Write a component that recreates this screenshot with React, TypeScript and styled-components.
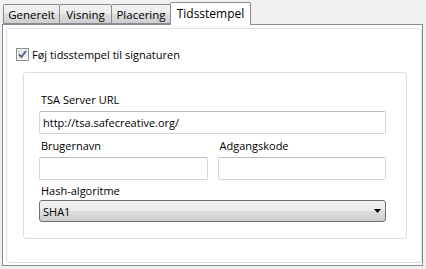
import React, { useState } from "react";
import styled, { createGlobalStyle } from "styled-components";

const GlobalStyle = createGlobalStyle`
  html, body {
    margin: 0;
    padding: 0;
    background: #f0f0f0;
    width: 426px;
    height: 269px;
    overflow: hidden;
  }
  * {
    box-sizing: border-box;
  }
`;

const Window = styled.div`
  width: 426px;
  height: 269px;
  padding: 0 3px 3px 2px;
  display: flex;
  flex-direction: column;
  font-family: "Open Sans", "Liberation Sans", sans-serif;
  font-size: 11px;
  color: #000;
`;

const TabStrip = styled.div`
  display: flex;
  align-items: flex-end;
  height: 24px;
  padding-left: 1px;
  position: relative;
  z-index: 1;
`;

const Tab = styled.div<{ $active?: boolean; $width: number }>`
  width: ${({ $width }) => $width}px;
  height: ${({ $active }) => ($active ? "23px" : "20px")};
  margin-bottom: ${({ $active }) => ($active ? "-1px" : "0")};
  margin-left: -1px;
  border: 1px solid #898c95;
  border-bottom: ${({ $active }) => ($active ? "none" : "1px solid #898c95")};
  border-radius: 2px 2px 0 0;
  background: ${({ $active }) =>
    $active
      ? "#ffffff"
      : "linear-gradient(to bottom, #f2f2f2 0%, #ebebeb 50%, #dddddd 51%, #cfcfcf 100%)"};
  display: flex;
  align-items: ${({ $active }) => ($active ? "flex-start" : "center")};
  padding-top: ${({ $active }) => ($active ? "2px" : "0")};
  justify-content: center;
  font-size: ${({ $active }) => ($active ? "12px" : "11.5px")};
  cursor: default;
  &:first-child {
    margin-left: 0;
  }
`;

const Pane = styled.div`
  flex: 1;
  border: 1px solid #898c95;
  background: #ffffff;
  display: flex;
  padding: 3px 0 2px 3px;
`;

const PaneInner = styled.div`
  flex: 1;
  border: 1px solid #d9e0e8;
  border-radius: 3px;
  padding: 17px 14px 0 9px;
  display: flex;
  flex-direction: column;
`;

const CheckRow = styled.label`
  display: flex;
  align-items: center;
  gap: 3px;
  height: 16px;
  cursor: default;
`;

const CheckBox = styled.span<{ $checked: boolean }>`
  width: 13px;
  height: 13px;
  border: 1px solid #8f8f8f;
  background: linear-gradient(135deg, #dcdcdc 0%, #f6f6f6 100%);
  box-shadow: inset 0 0 0 1px #f4f4f4;
  display: flex;
  align-items: center;
  justify-content: center;
  svg {
    display: ${({ $checked }) => ($checked ? "block" : "none")};
  }
`;

const Group = styled.div`
  margin: 10px 0 0 7px;
  height: 167px;
  border: 1px solid #d5dfe5;
  border-radius: 3px;
  padding: 19px 20px 0 15px;
`;

const Field = styled.div<{ $gap?: number }>`
  display: flex;
  flex-direction: column;
  margin-top: ${({ $gap }) => $gap ?? 0}px;
  flex: 1;
`;

const FieldRow = styled.div`
  display: flex;
  gap: 10px;
  margin-top: 4px;
`;

const Label = styled.div<{ $tight?: boolean }>`
  height: 16px;
  line-height: 16px;
  padding-left: 2px;
  margin-bottom: ${({ $tight }) => ($tight ? "1px" : "3px")};
`;

const TextInput = styled.input`
  height: 23px;
  width: 100%;
  border: 1px solid #d3d6dc;
  border-top-color: #b9bcc2;
  border-radius: 2px;
  padding: 0 3px;
  font-family: inherit;
  font-size: 11px;
  color: #000;
  background: #fff;
  outline: none;
`;

const SelectBox = styled.div`
  height: 22px;
  border: 1px solid #707070;
  border-radius: 3px;
  background: linear-gradient(to bottom, #f2f2f2 0%, #ebebeb 50%, #dddddd 51%, #cfcfcf 100%);
  display: flex;
  align-items: center;
  justify-content: space-between;
  padding: 0 4px 0 3px;
  cursor: default;
`;

const tabs = [
  { name: "Generelt", width: 57 },
  { name: "Visning", width: 53 },
  { name: "Placering", width: 60 },
  { name: "Tidsstempel", width: 81 },
];

export default function App() {
  const [active, setActive] = useState("Tidsstempel");
  const [checked, setChecked] = useState(true);
  const [url, setUrl] = useState("http://tsa.safecreative.org/");
  const [user, setUser] = useState("");
  const [pass, setPass] = useState("");

  return (
    <>
      <GlobalStyle />
      <Window>
        <TabStrip>
          {tabs.map((t) => (
            <Tab
              key={t.name}
              $width={t.width}
              $active={t.name === active}
              onClick={() => setActive(t.name)}
            >
              {t.name}
            </Tab>
          ))}
        </TabStrip>
        <Pane>
          <PaneInner>
            <CheckRow onClick={() => setChecked(!checked)}>
              <CheckBox $checked={checked}>
                <svg width="9" height="9" viewBox="0 0 9 9">
                  <path
                    d="M1 4.5 L3.5 7 L8 1"
                    fill="none"
                    stroke="#4d6185"
                    strokeWidth="1.8"
                  />
                </svg>
              </CheckBox>
              Føj tidsstempel til signaturen
            </CheckRow>
            <Group>
              <Field>
                <Label>TSA Server URL</Label>
                <TextInput value={url} onChange={(e) => setUrl(e.target.value)} />
              </Field>
              <FieldRow>
                <Field>
                  <Label>Brugernavn</Label>
                  <TextInput value={user} onChange={(e) => setUser(e.target.value)} />
                </Field>
                <Field>
                  <Label>Adgangskode</Label>
                  <TextInput
                    type="password"
                    value={pass}
                    onChange={(e) => setPass(e.target.value)}
                  />
                </Field>
              </FieldRow>
              <Field $gap={3}>
                <Label $tight>Hash-algoritme</Label>
                <SelectBox>
                  <span>SHA1</span>
                  <svg width="7" height="4" viewBox="0 0 7 4">
                    <path d="M0 0 H7 L3.5 4 Z" fill="#000" />
                  </svg>
                </SelectBox>
              </Field>
            </Group>
          </PaneInner>
        </Pane>
      </Window>
    </>
  );
}
